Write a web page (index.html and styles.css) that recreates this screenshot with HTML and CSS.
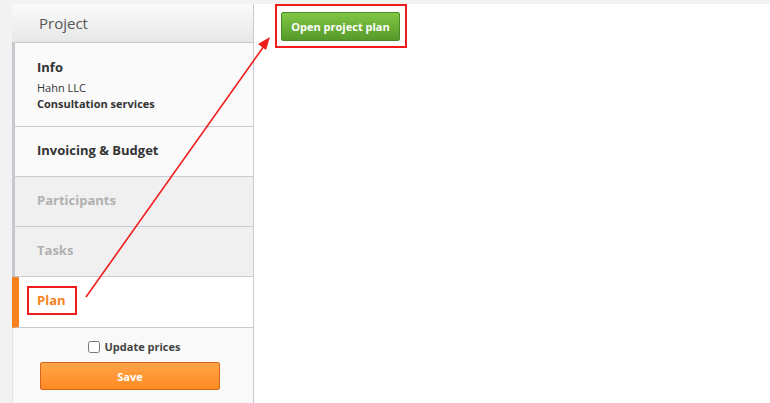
FILE: index.html
```html
<!DOCTYPE html>
<html>

<head>
    <title>Project plan</title>
    <link rel="stylesheet" href="styles.css">
</head>

<body>

    <div class="page">
        <div class="sidebar">
            <div class="sidebar-title">Project</div>

            <div class="nav-item info">
                <div class="nav-label">Info</div>
                <div class="nav-sub">Hahn LLC</div>
                <div class="nav-sub strong">Consultation services</div>
            </div>
            <div class="nav-item">
                <div class="nav-label">Invoicing &amp; Budget</div>
            </div>
            <div class="nav-item disabled">
                <div class="nav-label">Participants</div>
            </div>
            <div class="nav-item disabled">
                <div class="nav-label">Tasks</div>
            </div>
            <div class="nav-item active">
                <div class="nav-label"><span class="mark">Plan</span></div>
            </div>

            <div class="sidebar-footer">
                <label class="check-row">
                    <input type="checkbox" id="updatePrices" />
                    <span>Update prices</span>
                </label>
                <button class="save-btn">Save</button>
            </div>
        </div>

        <div class="main">
            <div class="mark-box">
                <button class="plan-btn">Open project plan</button>
            </div>
        </div>
    </div>

    <svg class="arrow" width="770" height="403" viewBox="0 0 770 403">
        <line x1="86" y1="297" x2="264" y2="46" stroke="#f01c1c" stroke-width="1.6" />
        <polygon points="270,37 258,44 266,50" fill="#f01c1c" />
    </svg>

</body>

</html>
```

FILE: styles.css
```css
body {
    margin: 0;
    padding: 4px 0 0 12px;
    font-family: "Open Sans", "Noto Sans", sans-serif;
    background-color: #f2f2f2;
    height: 399px;
    overflow: hidden;
}

.page {
    display: flex;
    height: 399px;
    background-color: #fff;
}

.sidebar {
    width: 242px;
    display: flex;
    flex-direction: column;
}

.sidebar-title {
    height: 38px;
    line-height: 38px;
    padding-left: 27px;
    font-size: 15px;
    color: #555;
    background: linear-gradient(#fbfbfb, #e6e7e8);
    border-right: 1px solid #c8ccd0;
    border-bottom: 1px solid #c4c8cc;
}

.nav-item {
    padding: 14px 10px 17px 22px;
    background-color: #fafafa;
    border-left: 3px solid #c5c9ce;
    border-right: 1px solid #c8ccd0;
    border-bottom: 1px solid #c8ccd0;
}

.nav-item.info {
    padding-top: 15px;
    padding-bottom: 14px;
}

.nav-label {
    font-size: 13px;
    line-height: 18px;
    font-weight: bold;
    color: #333;
}

.nav-sub {
    font-size: 11px;
    line-height: 16px;
    color: #333;
}

.nav-label + .nav-sub {
    margin-top: 4px;
}

.nav-sub.strong {
    font-weight: bold;
}

.nav-item.disabled {
    background-color: #f0f0f0;
}

.nav-item.disabled .nav-label {
    color: #b0b0b0;
}

.nav-item.active {
    background-color: #fff;
    border-left: 7px solid #f7821f;
    padding-left: 18px;
}

.nav-item.active .nav-label {
    color: #f7821f;
}

.mark {
    display: inline-block;
    margin: -5px 0 -5px -10px;
    padding: 3px 9px 4px 8px;
    border: 2px solid #f01c1c;
}

.sidebar-footer {
    flex: 1;
    background-color: #f9f9f9;
    border-left: 1px solid #e2e2e2;
    border-right: 1px solid #c8ccd0;
    padding-top: 11px;
}

.check-row {
    display: flex;
    align-items: center;
    justify-content: center;
    gap: 5px;
    font-size: 11px;
    font-weight: bold;
    color: #444;
    margin-left: 2px;
}

.check-row input {
    margin: 0;
    width: 12px;
    height: 12px;
}

.save-btn {
    display: block;
    width: 180px;
    height: 28px;
    margin: 8px 0 0 27px;
    font-family: inherit;
    font-size: 11px;
    font-weight: bold;
    color: #fff;
    background: linear-gradient(#ffa548, #ff8a22);
    border: 1px solid #d3661c;
    border-radius: 2px;
    cursor: pointer;
}

.main {
    flex: 1;
    padding-left: 21px;
}

.mark-box {
    display: inline-block;
    padding: 6px 5px 5px 4px;
    border: 2px solid #f01c1c;
}

.plan-btn {
    display: block;
    width: 119px;
    height: 29px;
    font-family: inherit;
    font-size: 11px;
    font-weight: bold;
    color: #fff;
    background: linear-gradient(#80c745, #56992a);
    border: 1px solid #4b8a24;
    border-radius: 2px;
    cursor: pointer;
}

.arrow {
    position: absolute;
    left: 0;
    top: 0;
    pointer-events: none;
}
```
